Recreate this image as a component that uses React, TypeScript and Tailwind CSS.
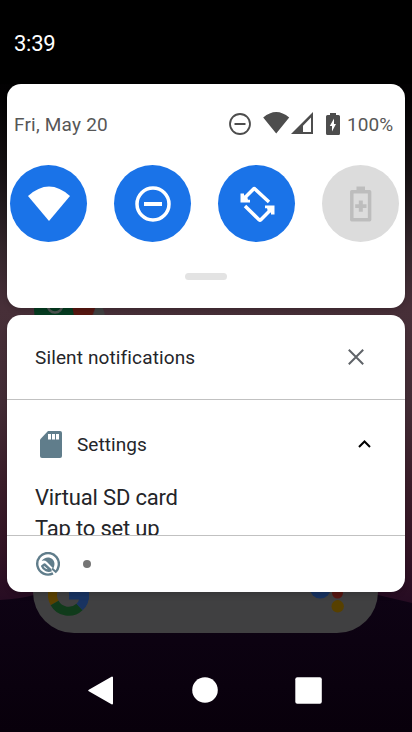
import React from "react";

function WallpaperLayer() {
  return (
    <svg className="absolute inset-0 h-[732px] w-[412px]" viewBox="0 0 412 732" aria-hidden="true">
      <defs>
        <linearGradient id="sky" x1="0" y1="0" x2="0" y2="1">
          <stop offset="0" stopColor="#000" />
          <stop offset="0.13" stopColor="#020102" />
          <stop offset="0.24" stopColor="#171214" />
          <stop offset="0.34" stopColor="#33262b" />
          <stop offset="0.42" stopColor="#472f38" />
          <stop offset="0.55" stopColor="#422c35" />
          <stop offset="0.66" stopColor="#3a1d29" />
          <stop offset="0.75" stopColor="#321424" />
          <stop offset="0.83" stopColor="#250b22" />
        </linearGradient>
        <linearGradient id="ground" x1="0" y1="0" x2="0" y2="1">
          <stop offset="0" stopColor="#0e0314" />
          <stop offset="1" stopColor="#08000b" />
        </linearGradient>
      </defs>
      <path fill="url(#sky)" d="M0 0h412v732H0z" />
      <path fill="url(#ground)" d="M0 600Q20 599 34 595L378 595L412 603V732H0Z" />
      <path fill="#404041" d="M33 555h345v37a41 41 0 0 1-41 41H74a41 41 0 0 1-41-41z" />
      <circle cx="58" cy="310" r="24" fill="#063c21" />
      <path d="M71 300h27l-6 16H74z" fill="#571711" />
      <path d="M96 300q9 7 9 18H91q5-5 5-18" fill="#414141" />
      <circle cx="55" cy="305" r="7.500" fill="none" stroke="#4e5451" strokeWidth="2.500" />
      <g fill="none" strokeWidth="9">
        <path stroke="#5a4100" d="M53.300 590A16 16 0 0 0 54.600 603" />
        <path stroke="#103b1b" d="M54.600 603A16 16 0 0 0 79.500 607" />
        <path stroke="#183361" d="M79.500 607A16 16 0 0 0 84.500 594" />
      </g>
      <path fill="#183361" d="M69 585h20v14.500H69z" />
      <circle cx="320.300" cy="588" r="10.500" fill="#183361" />
      <circle cx="337.500" cy="593" r="5.500" fill="#571711" />
      <circle cx="337.700" cy="606.300" r="6.200" fill="#574000" />
    </svg>
  );
}

function StatusIcons() {
  return (
    <svg className="h-6 w-[116px]" viewBox="226 112 116 24" aria-hidden="true">
      <circle cx="240" cy="124" r="10" fill="none" stroke="#4d4d4d" strokeWidth="1.800" />
      <path fill="#4d4d4d" d="M234.500 123h11v2h-11zM276.200 133.500l-13-16q13-11 26 0zM313 112v22h-22zM311 117.500l-8 8.300V132h8z" fillRule="evenodd" />
      <path fill="#4d4d4d" d="M330 113h6v2h2.500q1.500 0 1.500 1.500v17q0 1.500-1.500 1.500h-11q-1.500 0-1.500-1.500v-17q0-1.500 1.500-1.500h2.500z" />
      <path fill="#fff" d="M334 118.500v5.500h2l-4 7.500V126h-2.200z" />
    </svg>
  );
}

function Tile({ children, off = false }: { children: React.ReactNode; off?: boolean }) {
  return (
    <button className={`flex size-[77px] shrink-0 items-center justify-center rounded-full ${off ? "bg-[#dcdcdc] text-[#bdbdbd]" : "bg-[#1a73e8] text-white"}`}>
      <svg className="size-[43px]" viewBox="-0.5 -0.5 43 43" aria-hidden="true">{children}</svg>
    </button>
  );
}

function QuickSettings() {
  return (
    <section className="mx-[7px] h-56 overflow-hidden rounded-[14px] bg-white shadow-md">
      <div className="flex h-20 items-center pl-[7px] pr-[10px] text-[19px] text-[#575757]">
        <span className="flex-1 pt-[2px] tracking-[0.210px]">Fri, May 20</span>
        <StatusIcons />
        <span className="ml-[5px] w-[48px] whitespace-nowrap pt-[2px] tracking-[0.100px]">100%</span>
      </div>
      <div className="flex gap-[27px] pl-[3px] pt-px">
        <Tile><path fill="currentColor" d="M21.500 38.500L.5 13.500Q21.500-5.500 42.500 13.500z" /></Tile>
        <Tile>
          <circle cx="21.500" cy="21.500" r="16" fill="none" stroke="currentColor" strokeWidth="3.500" />
          <path fill="currentColor" d="M12.500 19.600h18v4h-18z" />
        </Tile>
        <Tile>
          <path fill="none" stroke="currentColor" strokeWidth="3.500" d="M33.500 19.500L19.500 6.500Q18.700 5.700 18 6.500L9.500 15M9.500 23.500l14 13.700q1 .8 1.800 0L34 28.500" />
          <path fill="currentColor" d="M5 11h3.500v2.300l2.500-1 1.500 5h2V20H5zM39 32h-3.500v-2.300l-2.500 1-1.500-5h-2V23H39z" />
        </Tile>
        <Tile off>
          <path fill="none" stroke="currentColor" strokeWidth="3.500" d="M12.300 9.300h17.800v28H12.300z" strokeLinejoin="round" />
          <path fill="currentColor" d="M17 4h8.500v5H17zM19.300 18h4v3.800H27v3.800h-3.700v3.600h-4v-3.600h-3.600v-3.800h3.600z" />
        </Tile>
      </div>
      <div className="mx-auto mt-[31px] h-[7px] w-[42px] rounded-full bg-[#e3e3e3]" />
    </section>
  );
}

function Notifications() {
  return (
    <section className="mx-[7px] mt-[7px] h-[277px] overflow-hidden rounded-[14px] bg-white text-[#242529] shadow-md">
      <header className="flex h-[85px] items-center justify-between border-b border-[#c1c1c1] pl-7 pr-[41px]">
        <h2 className="pt-[2px] text-[19px] tracking-[0.130px]">Silent notifications</h2>
        <svg className="size-4" viewBox="0 0 16 16" aria-label="Clear"><path d="M.8.800l14.400 14.400M15.200.800L.8 15.200" stroke="#5f6368" strokeWidth="2" /></svg>
      </header>
      <article className="h-[136px] overflow-hidden border-b border-[#c1c1c1]">
        <div className="flex h-[82px] items-center pl-[33px] pr-[34px] pt-[6px]">
          <svg className="h-[27px] w-[22px]" viewBox="0 0 22 27" aria-hidden="true">
            <path fill="#607d8b" d="M8 0h12q2 0 2 2v23q0 2-2 2H2q-2 0-2-2V8.500z" />
            <path fill="#fff" d="M8 3h3v5.500H8zM12 3h3v5.500h-3zM16 3h3v5.500h-3z" />
          </svg>
          <h3 className="ml-[15px] flex-1 pt-[2px] text-[19px] tracking-[0.060px]">Settings</h3>
          <svg className="h-2 w-[13px]" viewBox="0 0 13 8" aria-label="Collapse"><path d="M1 7l5.500-5.500L12 7" fill="none" stroke="#000" strokeWidth="2" /></svg>
        </div>
        <div className="pl-7 text-[22px] leading-[31px] tracking-[-0.180px]">
          <p>Virtual SD card</p>
          <p>Tap to set up</p>
        </div>
      </article>
      <footer className="flex h-14 items-center pl-[29px]">
        <svg className="size-6" viewBox="0 0 24 24" aria-hidden="true">
          <path fill="none" stroke="#607d8b" strokeWidth="2.400" d="M17 21.400A10.800 10.800 0 1 1 22.500 14.500Q22 17.500 20 19.500" />
          <path fill="#607d8b" d="M5.700 9C8 5 13.500 4.300 16.500 7.300c2.500 2.500 2.500 6 .8 9.200L11 10Q8.500 7.800 5.700 9" />
          <path fill="none" stroke="#607d8b" strokeWidth="2.400" strokeLinejoin="round" d="M15.500 18.200C12 19.500 7.500 18 6.200 14.200L8.500 12.500l6 5.500" />
          <path stroke="#607d8b" strokeWidth="2.200" d="M16 16.500l4.500 4" />
        </svg>
        <span className="ml-[23px] size-2 rounded-full bg-[#757575]" />
      </footer>
    </section>
  );
}

export default function App() {
  return (
    <main className="relative h-[732px] w-[412px] overflow-hidden bg-black font-[Roboto,sans-serif]">
      <WallpaperLayer />
      <div className="relative flex h-full flex-col">
        <header className="flex h-[84px] shrink-0 items-center bg-black pl-[14px] pt-[2px] text-[22px] tracking-[-0.250px] text-white">3:39</header>
        <QuickSettings />
        <Notifications />
        <nav className="mt-[84px] flex h-7 items-center pl-[88px]">
          <svg className="h-[29px] w-[234px]" viewBox="88 676 234 29" aria-label="Navigation">
            <path fill="#fff" stroke="#fff" strokeWidth="2" strokeLinejoin="round" d="M89.300 690.500L112 677.500v26z" />
            <circle cx="205" cy="690" r="12.800" fill="#fff" />
            <rect x="295.300" y="677.300" width="26.500" height="26.500" rx="2" fill="#fff" />
          </svg>
        </nav>
      </div>
    </main>
  );
}
